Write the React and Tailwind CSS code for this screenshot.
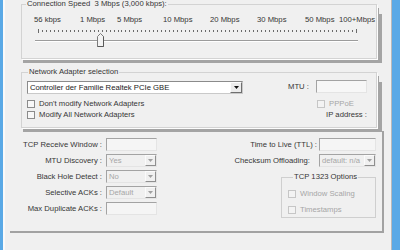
import React from "react";

const ticks = Array.from({ length: 81 }, (_, i) => 16 + i * 3.975);

function Check({ label, disabled, className = "" }) {
  return (
    <div className={`flex items-center h-[11px] ${className}`}>
      <span
        className={`w-[8px] h-[8px] border ${
          disabled ? "border-[#c6c6c6] bg-[#f3f3f3]" : "border-[#8c8c8c] bg-[#f8f8f8]"
        }`}
      />
      <span className={`ml-[4px] whitespace-nowrap ${disabled ? "text-[#a6a6a6]" : ""}`}>{label}</span>
    </div>
  );
}

function Box({ className = "" }) {
  return (
    <div
      className={`h-[13px] border border-t-[#a3a3a3] border-l-[#a3a3a3] border-r-[#e4e4e4] border-b-[#e4e4e4] bg-[#f5f5f5] ${className}`}
    />
  );
}

function Drop({ value, className = "" }) {
  return (
    <div
      className={`h-[13px] flex border border-t-[#a3a3a3] border-l-[#a3a3a3] border-r-[#e4e4e4] border-b-[#e4e4e4] bg-[#f0f0f0] ${className}`}
    >
      <span className="flex-1 pl-[2px] leading-[11px] text-[#a6a6a6] whitespace-nowrap overflow-hidden">{value}</span>
      <span className="w-[11px] border-t border-l border-t-[#fbfbfb] border-l-[#fbfbfb] border-r border-b border-r-[#8f8f8f] border-b-[#8f8f8f] flex items-center justify-center">
        <svg width="5" height="3" viewBox="0 0 5 3">
          <path d="M0 0H5L2.5 3Z" fill="#a0a0a0" />
        </svg>
      </span>
    </div>
  );
}

const panelShadow =
  "shadow-[1px_1px_0_#fdfdfd,8px_7px_0_-3px_#a4a4a4,2px_4px_0_#a4a4a4]";

export default function App() {
  return (
    <div className="w-[400px] h-[250px] bg-[#5aa9e6] flex overflow-hidden font-['Liberation_Sans',Arial,sans-serif] text-[7.7px] leading-[8px] text-[#363636]">
      <div className="ml-[3px] w-[389px] h-full bg-[#f0f0f0] border-l-2 border-l-[#fafafa] border-r border-r-[#b9b9b9] flex flex-col">
        {/* Connection speed */}
        <fieldset className={`ml-[16px] w-[356px] min-w-0 border border-[#d3d3d3] pb-[10px] ${panelShadow}`}>
          <legend className="ml-[4px] px-[1px] whitespace-pre">Connection Speed  3 Mbps (3,000 kbps):</legend>
          <div className="flex pl-[12px] mt-[8px] h-[8px] whitespace-nowrap">
            <span className="w-[46px]">56 kbps</span>
            <span className="w-[37px]">1 Mbps</span>
            <span className="w-[46px]">5 Mbps</span>
            <span className="w-[47px]">10 Mbps</span>
            <span className="w-[47px]">20 Mbps</span>
            <span className="w-[48px]">30 Mbps</span>
            <span className="w-[34px]">50 Mbps</span>
            <span>100+Mbps</span>
          </div>
          <svg width="354" height="24" viewBox="0 0 354 24" className="block">
            {ticks.map((x, i) => (
              <rect
                key={i}
                x={Math.round(x)}
                y={i === 0 || i === 80 ? 5 : 6}
                width="1"
                height={i === 0 || i === 80 ? 4 : 2}
                fill="#6b6b6b"
              />
            ))}
            <rect x="13" y="16" width="323" height="1" fill="#9c9c9c" />
            <rect x="13" y="17" width="323" height="1" fill="#ffffff" />
            <path d="M75.5 12.5L78.5 9.5L81.5 12.5V22.5H75.5Z" fill="#f3f3f3" stroke="#7c7c7c" />
            <path d="M81.5 12.5V22.5H75.5" fill="none" stroke="#5a5a5a" />
          </svg>
        </fieldset>

        {/* Network adapter */}
        <fieldset className={`ml-[16px] mt-[9px] w-[356px] min-w-0 border border-[#d3d3d3] pb-[7px] ${panelShadow}`}>
          <legend className="ml-[6px] px-[1px] whitespace-nowrap">Network Adapter selection</legend>
          <div className="flex">
            <div className="ml-[5px] w-[216px] flex flex-col">
              <div className="mt-[5px] h-[13px] flex border border-[#8b8b8b] border-r-[#c9c9c9] border-b-[#c9c9c9] bg-white">
                <span className="flex-1 pl-[2px] leading-[11px] text-[#1a1a1a] whitespace-nowrap">
                  Controller der Familie Realtek PCIe GBE
                </span>
                <span className="w-[12px] border border-t-[#fdfdfd] border-l-[#fdfdfd] border-r-[#6f6f6f] border-b-[#6f6f6f] bg-[#ececec] flex items-center justify-center">
                  <svg width="5" height="3" viewBox="0 0 5 3">
                    <path d="M0 0H5L2.5 3Z" fill="#111" />
                  </svg>
                </span>
              </div>
              <Check className="mt-[4px]" label="Don't modify Network Adapters" />
              <Check label="Modify All Network Adapters" />
            </div>
            <div className="ml-auto mr-[9px] w-[79px] flex flex-col">
              <div className="mt-[4px] h-[13px] flex items-center justify-between">
                <span className="whitespace-nowrap">MTU :</span>
                <Box className="w-[51px] bg-[#f7f7f7]" />
              </div>
              <Check className="mt-[5px] pl-[29px]" disabled label="PPPoE" />
              <div className="h-[11px] flex items-center justify-end whitespace-nowrap">IP address :</div>
            </div>
          </div>
        </fieldset>

        {/* Lower settings */}
        <div className="ml-[5px] mt-[3px] w-[374px] h-[102px] border-r-2 border-b-2 border-[#a2a2a2] flex pt-[7px]">
          <div className="w-[147px] flex flex-col gap-[3px]">
            {[
              ["TCP Receive Window :", null],
              ["MTU Discovery :", "Yes"],
              ["Black Hole Detect :", "No"],
              ["Selective ACKs :", "Default"],
              ["Max Duplicate ACKs :", null],
            ].map(([label, val]) => (
              <div key={label} className="h-[13px] flex items-center">
                <span className="w-[92px] text-right whitespace-nowrap">{label}</span>
                {val ? <Drop className="ml-[4px] w-[51px]" value={val} /> : <Box className="ml-[4px] w-[51px]" />}
              </div>
            ))}
          </div>
          <div className="ml-auto mr-[6px] w-[143px] flex flex-col">
            <div className="h-[13px] flex items-center">
              <span className="flex-1 text-right pr-[2px] whitespace-nowrap">Time to Live (TTL) :</span>
              <Box className="w-[57px]" />
            </div>
            <div className="mt-[3px] h-[13px] flex items-center">
              <span className="flex-1 text-right pr-[9px] whitespace-nowrap">Checksum Offloading:</span>
              <Drop className="w-[57px]" value="default: n/a" />
            </div>
            <fieldset className="mt-[6px] self-end w-[95px] min-w-0 border border-[#cfcfcf] pb-[2px] pl-[6px]">
              <legend className="ml-[5px] px-[1px] whitespace-nowrap">TCP 1323 Options</legend>
              <Check className="mt-[7px]" disabled label="Window Scaling" />
              <Check className="mt-[5px]" disabled label="Timestamps" />
            </fieldset>
          </div>
        </div>
      </div>
    </div>
  );
}
